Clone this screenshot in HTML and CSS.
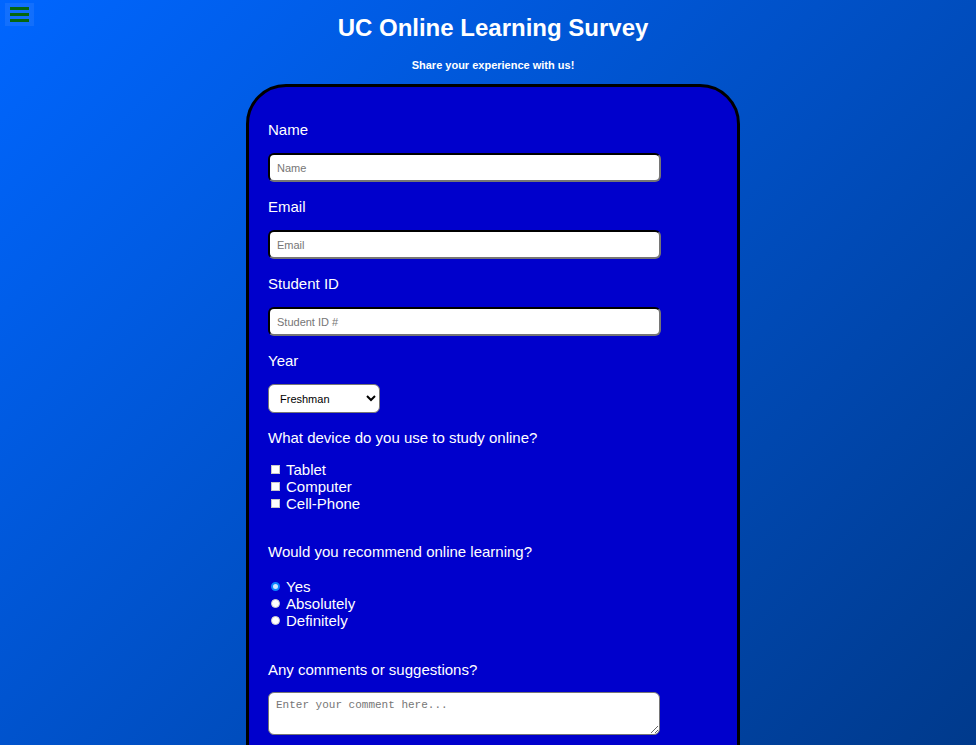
FILE: index.html
```html
<!DOCTYPE html>
<html lang="en">
<head>
<meta charset="utf-8">
<title>UC Online Learning Survey</title>
<link rel="stylesheet" href="styles.css">
</head>
<body>
<button class="menu-btn" type="button" aria-label="Menu">
  <span class="bar"></span><span class="bar"></span><span class="bar"></span>
</button>
<main class="page">
  <h1 class="title">UC Online Learning Survey</h1>
  <p class="subtitle">Share your experience with us!</p>
  <form class="card">
    <label class="field-label" for="name">Name</label>
    <input class="text-input" id="name" type="text" placeholder="Name">

    <label class="field-label" for="email">Email</label>
    <input class="text-input" id="email" type="email" placeholder="Email">

    <label class="field-label" for="sid">Student ID</label>
    <input class="text-input" id="sid" type="text" placeholder="Student ID #">

    <label class="field-label" for="year">Year</label>
    <select class="select" id="year">
      <option>Freshman</option>
      <option>Sophomore</option>
      <option>Junior</option>
      <option>Senior</option>
    </select>

    <p class="field-label question">What device do you use to study online?</p>
    <div class="choices">
      <label class="choice"><input class="check" type="checkbox"> Tablet</label>
      <label class="choice"><input class="check" type="checkbox"> Computer</label>
      <label class="choice"><input class="check" type="checkbox"> Cell-Phone</label>
    </div>

    <p class="field-label question gap-top">Would you recommend online learning?</p>
    <div class="choices radios">
      <label class="choice"><input class="radio active" type="radio" name="rec"> Yes</label>
      <label class="choice"><input class="radio" type="radio" name="rec"> Absolutely</label>
      <label class="choice"><input class="radio" type="radio" name="rec"> Definitely</label>
    </div>

    <label class="field-label comments-label" for="comments">Any comments or suggestions?</label>
    <textarea class="comment" id="comments" placeholder="Enter your comment here..."></textarea>
  </form>
</main>
</body>
</html>
```

FILE: styles.css
```css
html {
  background: linear-gradient(135deg, #0066ff 0%, #003a8c 100%) fixed;
  min-height: 100%;
}
body {
  margin: 0;
  font-family: "Liberation Sans", Arial, sans-serif;
  color: #ffffff;
}
.menu-btn {
  position: absolute;
  left: 5px;
  top: 3px;
  width: 29px;
  height: 23px;
  padding: 4px 5px 0;
  border: none;
  background: rgba(255, 255, 255, 0.07);
  display: flex;
  flex-direction: column;
  gap: 3px;
  cursor: pointer;
}
.menu-btn .bar {
  display: block;
  width: 19px;
  height: 3px;
  background: #05660f;
}
.page {
  padding-left: 10px;
  display: flex;
  flex-direction: column;
  align-items: center;
}
.title {
  margin: 13px 0 0;
  font-size: 24px;
  line-height: 30px;
  font-weight: bold;
}
.subtitle {
  margin: 15px 0 0;
  font-size: 11px;
  line-height: 14px;
  font-weight: bold;
}
.card {
  box-sizing: border-box;
  width: 494px;
  margin-top: 12px;
  padding: 19px 19px 60px;
  background: #0000cc;
  border: 3px solid #000000;
  border-radius: 40px;
  display: flex;
  flex-direction: column;
  align-items: flex-start;
}
.field-label {
  display: block;
  margin: 16px 0 15px;
  font-size: 15px;
  line-height: 17px;
}
.card > .field-label:first-child { margin-top: 15px; }
.question { margin-bottom: 15px; }
.gap-top { margin-top: 31px; }
.comments-label { margin: 32px 0 14px; }
.text-input {
  box-sizing: border-box;
  width: 393px;
  height: 29px;
  margin: 0;
  padding: 0 7px;
  border: 2px inset #767676;
  border-top-color: #333333;
  border-left-color: #333333;
  border-radius: 6px;
  background: #ffffff;
  font-family: "Liberation Sans", Arial, sans-serif;
  font-size: 11px;
  color: #000;
}
.text-input::placeholder { color: #767676; }
.select {
  box-sizing: border-box;
  width: 112px;
  height: 29px;
  margin: 0;
  padding: 0 4px 0 7px;
  border: 1px solid #767676;
  border-radius: 6px;
  background: #ffffff;
  font-family: "Liberation Sans", Arial, sans-serif;
  font-size: 11px;
  color: #000;
}
.choices {
  display: flex;
  flex-direction: column;
  padding-left: 3px;
}
.radios { padding-top: 3px; }
.choice {
  display: flex;
  align-items: center;
  gap: 6px;
  font-size: 15px;
  line-height: 17px;
}
.check {
  appearance: none;
  box-sizing: border-box;
  width: 9px;
  height: 9px;
  margin: 0;
  background: #ffffff;
  border: 1px solid #c8c8c8;
}
.radio {
  appearance: none;
  box-sizing: border-box;
  width: 9px;
  height: 9px;
  margin: 0;
  background: #ffffff;
  border: 1px solid #d0d0d0;
  border-radius: 50%;
}
.radio.active {
  background: #cfe6ff;
  border: 2px solid #0a84ff;
}
.comment {
  box-sizing: border-box;
  width: 392px;
  height: 43px;
  margin: 0;
  padding: 6px 7px;
  border: 1px solid #767676;
  border-radius: 6px;
  background: #ffffff;
  font-family: "Liberation Mono", "DejaVu Sans Mono", monospace;
  font-size: 11px;
  resize: vertical;
}
.comment::placeholder { color: #767676; }
```
